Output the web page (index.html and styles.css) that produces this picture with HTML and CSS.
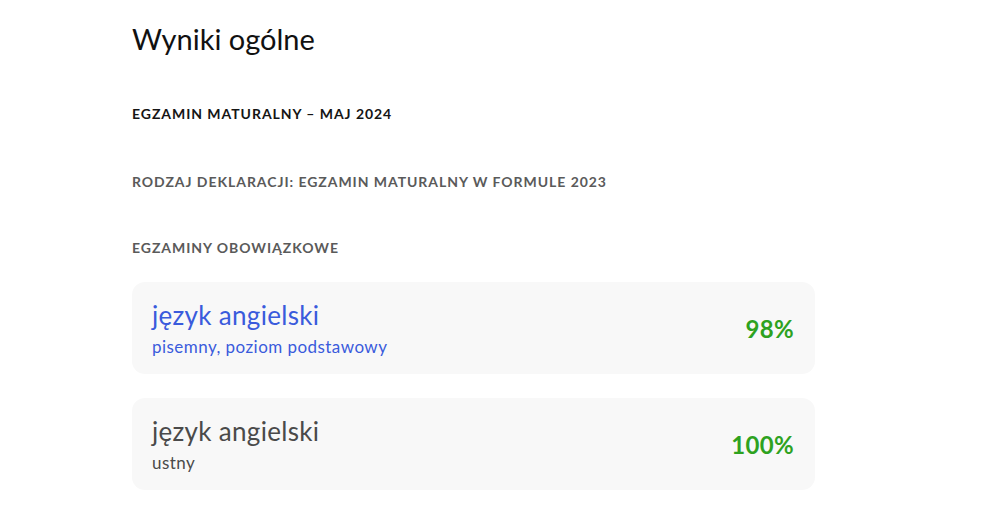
FILE: index.html
```html
<!DOCTYPE html>
<html lang="pl">
<head>
<meta charset="utf-8">
<title>Wyniki ogólne</title>
<link rel="stylesheet" href="styles.css">
</head>
<body>
<main class="page">
  <h1 class="title">Wyniki ogólne</h1>
  <h2 class="section-main">Egzamin maturalny – maj 2024</h2>
  <h3 class="section-sub">Rodzaj deklaracji: egzamin maturalny w formule 2023</h3>
  <h3 class="section-sub group">Egzaminy obowiązkowe</h3>
  <div class="cards">
    <div class="card">
      <div class="card-info active">
        <div class="subject">język angielski</div>
        <div class="level">pisemny, poziom podstawowy</div>
      </div>
      <div class="score">98%</div>
    </div>
    <div class="card">
      <div class="card-info">
        <div class="subject">język angielski</div>
        <div class="level">ustny</div>
      </div>
      <div class="score">100%</div>
    </div>
  </div>
</main>
</body>
</html>
```

FILE: styles.css
```css
* { box-sizing: border-box; }
html, body { margin: 0; padding: 0; background: #fff; }
body {
  font-family: "Lato", "Open Sans", sans-serif;
  color: #111;
}
.page {
  width: 683px;
  margin-left: 132px;
  padding-top: 21px;
}
.title {
  margin: 0;
  font-size: 29px;
  font-weight: 400;
  line-height: 36px;
  color: #111;
}
.section-main,
.section-sub {
  font-size: 14px;
  font-weight: 700;
  line-height: 16px;
  letter-spacing: 0.95px;
  text-transform: uppercase;
}
.section-main {
  margin: 49px 0 0;
  color: #151515;
}
.section-sub {
  margin: 52px 0 0;
  color: #5a5a5a;
}
.section-sub.group { margin-top: 50px; }
.cards {
  margin-top: 26px;
  display: flex;
  flex-direction: column;
  gap: 24px;
}
.card {
  height: 92px;
  background: #f8f8f8;
  border-radius: 13px;
  padding: 0 21px 0 20px;
  display: flex;
  align-items: center;
  justify-content: space-between;
}
.subject {
  font-size: 26px;
  line-height: 32px;
  letter-spacing: 0.3px;
  color: #4a4a4a;
}
.level {
  margin-top: 5px;
  font-size: 17px;
  line-height: 22px;
  letter-spacing: 0.45px;
  color: #4a4a4a;
}
.card-info.active .subject,
.card-info.active .level { color: #3a5bdc; }
.score {
  font-size: 24px;
  font-weight: 700;
  letter-spacing: 0.3px;
  color: #2ea21f;
}
```
